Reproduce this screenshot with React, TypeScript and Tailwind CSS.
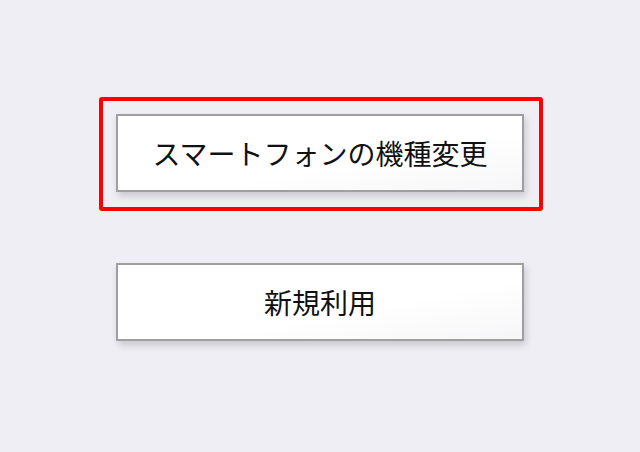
const font = { fontFamily: '"Noto Sans CJK JP", "Noto Sans", sans-serif' };

function MenuButton({ label }: { label: string }) {
  return (
    <button
      type="button"
      className="flex h-[78px] w-[408px] items-center justify-center border-2 border-[#9f9f9f] bg-gradient-to-br from-white from-60% to-[#f6f6f8] text-[28px] font-normal text-[#111] shadow-[2px_4px_7px_rgba(0,0,0,0.16)]"
    >
      {label}
    </button>
  );
}

export default function App() {
  return (
    <div className="flex h-[452px] w-[640px] flex-col items-center bg-[#efeef4] pt-[97px]" style={font}>
      <div className="ml-[2px] rounded-[3px] border-4 border-[#ff0000] pt-[13px] pr-[15px] pb-[15px] pl-[13px]">
        <MenuButton label="スマートフォンの機種変更" />
      </div>
      <div className="mt-[52px]">
        <MenuButton label="新規利用" />
      </div>
    </div>
  );
}
